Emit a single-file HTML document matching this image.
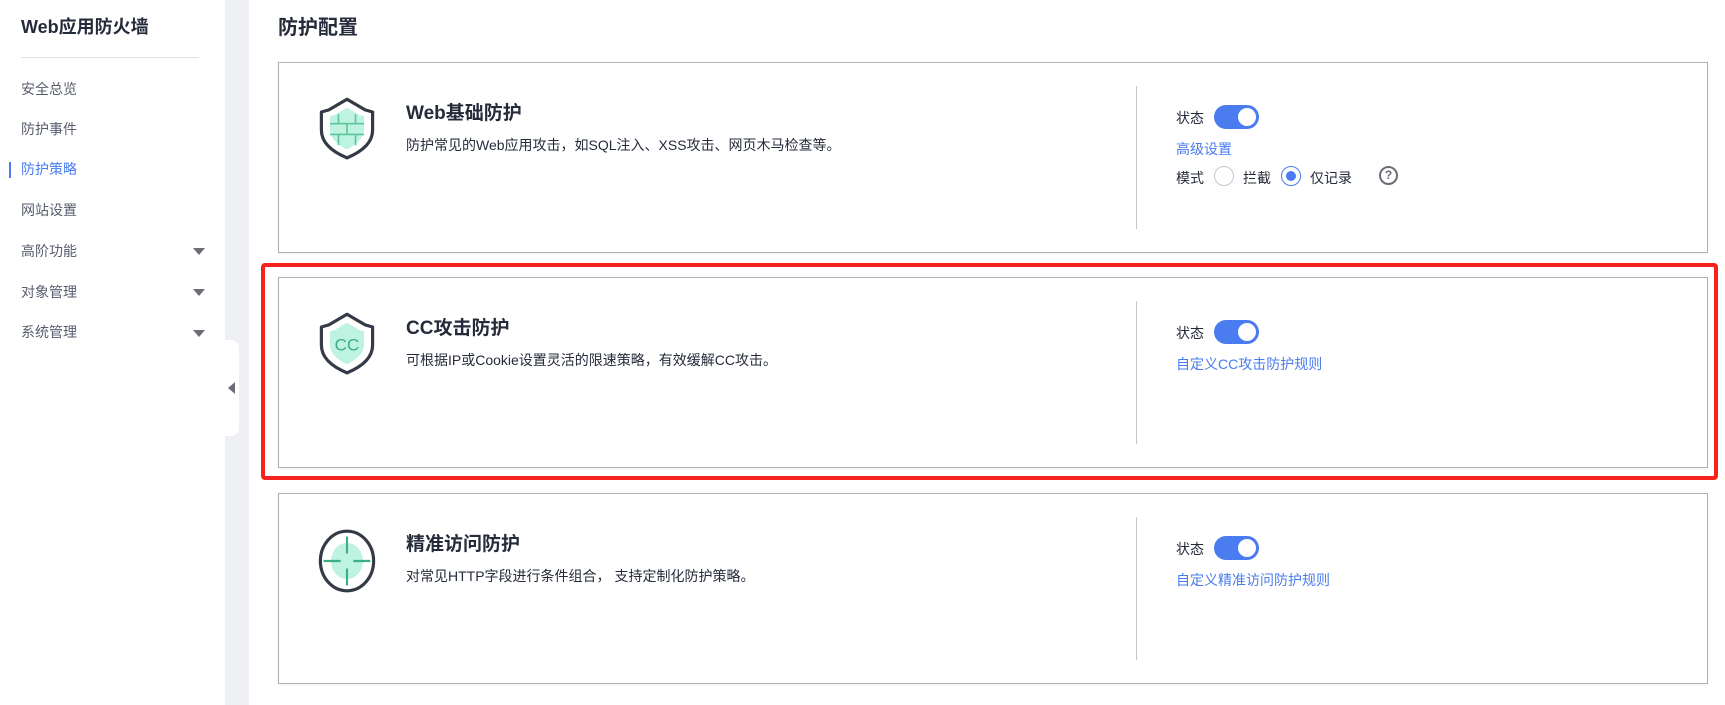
<!DOCTYPE html>
<html><head><meta charset="utf-8">
<style>
*{margin:0;padding:0;box-sizing:border-box}
body{width:1725px;height:705px;overflow:hidden;background:#fff;font-family:"Liberation Sans","Noto Sans CJK SC",sans-serif;color:#252b3a;position:relative}
.abs{position:absolute}
.side{left:0;top:0;width:225px;height:705px;background:#fff}
.gap{left:225px;top:0;width:24px;height:705px;background:#eff0f4}
.stitle{left:21px;top:13px;font-size:18px;font-weight:bold;color:#252b3a}
.sdiv{left:21px;top:57px;width:178px;height:1px;background:#dfe1e6}
.si{left:21px;font-size:14px;color:#575d6c}
.arr{width:0;height:0;border-left:6px solid transparent;border-right:6px solid transparent;border-top:7px solid #6b6e75}
.tab{left:220px;top:340px;width:19px;height:96px;background:#fff;border-radius:0 8px 8px 0}
.card{left:278px;width:1430px;height:191px;border:1px solid #adb0b8;background:#fff;box-shadow:0 1px 3px rgba(0,0,0,.06)}
.ct{position:absolute;left:127px;top:35px;font-size:19px;font-weight:bold;color:#252b3a}
.cd{position:absolute;left:127px;top:72px;font-size:14px;color:#252b3a}
.vd{position:absolute;left:857px;top:23px;width:1px;height:143px;background:#c4c6cc}
.rc{position:absolute;left:897px;font-size:14px;color:#252b3a}
.tg{position:absolute;width:45px;height:24px;border-radius:12px;background:#4a7cf0}
.tg::after{content:"";position:absolute;right:3px;top:3px;width:18px;height:18px;border-radius:50%;background:#fff}
.lk{color:#4a7cf0}
.red{left:261px;top:263px;height:217px;border:4px solid #f5231b;border-radius:4px;width:1457px}
</style></head><body>
<div class="abs side"></div>
<div class="abs gap"></div>
<div class="abs stitle">Web应用防火墙</div>
<div class="abs sdiv"></div>
<div class="abs si" style="top:79px">安全总览</div>
<div class="abs si" style="top:119px">防护事件</div>
<div class="abs" style="left:9px;top:162px;width:2px;height:16px;background:#4a7cf0"></div>
<div class="abs si" style="top:159px;color:#4a7cf0">防护策略</div>
<div class="abs si" style="top:200px">网站设置</div>
<div class="abs si" style="top:241px">高阶功能</div>
<div class="abs si" style="top:282px">对象管理</div>
<div class="abs si" style="top:322px">系统管理</div>
<div class="abs arr" style="left:193px;top:248px"></div>
<div class="abs arr" style="left:193px;top:289px"></div>
<div class="abs arr" style="left:193px;top:330px"></div>
<div class="abs tab"></div>
<div class="abs" style="left:228px;top:382px;width:0;height:0;border-top:6px solid transparent;border-bottom:6px solid transparent;border-right:7px solid #6b6e75"></div>

<div class="abs" style="left:278px;top:11px;font-size:20px;font-weight:bold;color:#252b3a">防护配置</div>

<div class="abs card" style="top:62px">
 <svg class="abs" style="left:38px;top:33px" width="60" height="64" viewBox="0 0 56 60">
  <path d="M28 3 L45 13 L52 15 L52 32 C52 45 40 53 28 58 C16 53 4 45 4 32 L4 15 L11 13 Z" fill="none" stroke="#353a47" stroke-width="3" stroke-linejoin="round"/>
  <path d="M28 11 L40 18 L44 19 L44 31 C44 40 36 46 28 50 C20 46 12 40 12 31 L12 19 L16 18 Z" fill="#bdf3e0"/>
  <g stroke="#5cc49a" stroke-width="1.5" fill="none"><path d="M12 26H44M12 36H44M20 17V26M36 17V26M28 26V36M20 36V46M36 36V46"/></g>
 </svg>
 <div class="ct">Web基础防护</div>
 <div class="cd">防护常见的Web应用攻击，如SQL注入、XSS攻击、网页木马检查等。</div>
 <div class="vd"></div>
 <div class="rc" style="top:45px">状态</div>
 <div class="tg" style="left:935px;top:42px"></div>
 <div class="rc lk" style="top:76px">高级设置</div>
 <div class="rc" style="top:105px">模式</div>
 <div class="abs" style="left:935px;top:103px;width:20px;height:20px;border-radius:50%;border:1px solid #c4c6cc"></div>
 <div class="rc" style="left:964px;top:105px">拦截</div>
 <div class="abs" style="left:1002px;top:103px;width:20px;height:20px;border-radius:50%;border:1px solid #4a7cf0"><div style="margin:4px;width:10px;height:10px;border-radius:50%;background:#4a7cf0"></div></div>
 <div class="rc" style="left:1031px;top:105px">仅记录</div>
 <div class="abs" style="left:1100px;top:103px;width:19px;height:19px;border-radius:50%;border:2px solid #6b6e75;font-size:12px;font-weight:bold;color:#6b6e75;text-align:center;line-height:15px">?</div>
</div>

<div class="abs card" style="top:277px">
 <svg class="abs" style="left:38px;top:33px" width="60" height="64" viewBox="0 0 56 60">
  <path d="M28 3 L45 13 L52 15 L52 32 C52 45 40 53 28 58 C16 53 4 45 4 32 L4 15 L11 13 Z" fill="none" stroke="#353a47" stroke-width="3" stroke-linejoin="round"/>
  <path d="M28 11 L40 18 L44 19 L44 31 C44 40 36 46 28 50 C20 46 12 40 12 31 L12 19 L16 18 Z" fill="#bdf3e0"/>
  <text x="28" y="37" text-anchor="middle" font-family="Liberation Sans,sans-serif" font-size="16" fill="#3fae84">CC</text>
 </svg>
 <div class="ct">CC攻击防护</div>
 <div class="cd">可根据IP或Cookie设置灵活的限速策略，有效缓解CC攻击。</div>
 <div class="vd"></div>
 <div class="rc" style="top:45px">状态</div>
 <div class="tg" style="left:935px;top:42px"></div>
 <div class="rc lk" style="top:76px">自定义CC攻击防护规则</div>
</div>

<div class="abs card" style="top:493px">
 <svg class="abs" style="left:37px;top:34px" width="62" height="66" viewBox="0 0 56 62">
  <ellipse cx="28" cy="31" rx="25" ry="28" fill="none" stroke="#353a47" stroke-width="3"/>
  <ellipse cx="28" cy="31" rx="15" ry="17" fill="#bdf3e0"/>
  <path d="M28 8V24M28 38V54M6 31H22M34 31H50" stroke="#3fae84" stroke-width="2"/>
 </svg>
 <div class="ct">精准访问防护</div>
 <div class="cd">对常见HTTP字段进行条件组合， 支持定制化防护策略。</div>
 <div class="vd"></div>
 <div class="rc" style="top:45px">状态</div>
 <div class="tg" style="left:935px;top:42px"></div>
 <div class="rc lk" style="top:76px">自定义精准访问防护规则</div>
</div>

<div class="abs red"></div>
</body></html>
